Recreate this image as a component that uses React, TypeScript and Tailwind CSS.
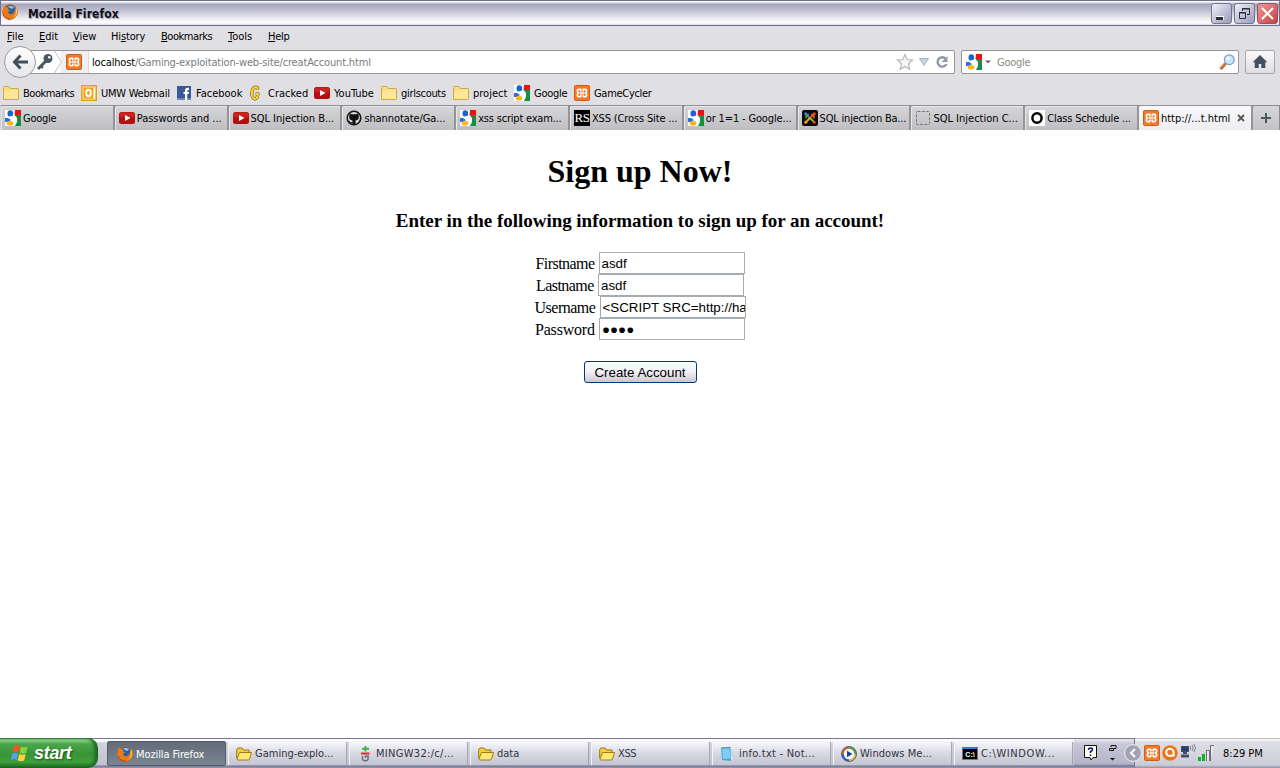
import React from "react";

type P = { className?: string };

const Firefox = ({ className = "" }: P) => (
  <svg viewBox="0 0 16 16" className={"size-4 shrink-0 " + className}>
    <circle cx="8" cy="8" r="7.700" fill="#d9620f" />
    <circle cx="8.400" cy="6.200" r="5.400" fill="#255fa8" />
    <path d="M6 2.500c2-1.500 5-.8 6 1l-2 1.500-2-1z" fill="#8cc6ea" />
    <path d="M1 4l1-3 1.500 2L6.500 3.500l-.5 2 2.500 1-2.500 1.200 1 2c2 1 4 .5 5-1.200l1.500-3.700L14 2.500c2.500 4 2 9-2 11.800C7 17 1 14 .5 9z" fill="#e87a17" />
    <path d="M14.200 3c2 4 1.200 9-3 11 2-2 3-5 2.500-8z" fill="#f9c83a" />
    <path d="M1 10q2 5 7.500 5.300" fill="none" stroke="#b8400c" />
  </svg>
);
const Xampp = ({ className = "" }: P) => (
  <svg viewBox="0 0 16 16" className={"size-4 shrink-0 " + className}>
    <rect x=".5" y=".5" width="15" height="15" rx="1" fill="#f27a2a" stroke="#cf5d12" />
    <path d="M6.800 6.500V4.400H5Q3.300 4.400 3.300 6T4.800 8Q3.300 8.300 3.300 10T5 11.600h1.800V9.500M9.200 6.500V4.400H11q1.700 0 1.700 1.600T11.200 8q1.500.3 1.500 2T11 11.600H9.200V9.500M6 8h4" fill="none" stroke="#fff" strokeWidth="1.600" strokeLinejoin="round" />
  </svg>
);
const Google = ({ className = "" }: P) => (
  <svg viewBox="0 0 16 16" className={"size-4 shrink-0 " + className}>
    <rect width="16" height="16" fill="#fff" />
    <path d="M8 0h8v5H9z" fill="#ee1111" />
    <path d="M10 5h6v11H9l2-4-2-4z" fill="#109145" />
    <path d="M0 8h3l3 2-3 2H0z" fill="#2c70d8" />
    <path d="M7 0h3l-.5 5L12 8v4l-2 4H7z" fill="#fff" />
    <ellipse cx="5.300" cy="3.400" rx="2.800" ry="3.200" fill="#1766cf" />
    <path d="M5.500 6.500c3 1 4 2 5 4" stroke="#fff" strokeWidth="1.500" fill="none" />
    <ellipse cx="5" cy="13.200" rx="3.300" ry="2.300" fill="#fbb516" />
  </svg>
);
const YouTube = () => (
  <svg viewBox="0 0 16 16" className="size-4 shrink-0">
    <rect y="2" width="16" height="12" rx="2.500" fill="#b0100f" />
    <rect x=".5" y="2.500" width="15" height="5" rx="2" fill="#c9221f" />
    <path d="M6 5l5.500 3L6 11z" fill="#fff" />
  </svg>
);
const Folder = () => (
  <svg viewBox="0 0 16 16" className="size-4 shrink-0">
    <path d="M.5 14.500v-12l.5-1h5l1.500 2h7.500l.5.500v10l-.5.500h-14z" fill="#f6dc82" stroke="#d3a843" />
    <path d="M1.300 6l5.700-.5 1-1h7V14H1.300z" fill="#fbe795" />
  </svg>
);
const TaskFolder = () => (
  <svg viewBox="0 0 16 16" className="size-4 shrink-0">
    <path d="M.7 12V3.500L2 2h4L7.500 4H13v2.500" fill="#f6ce45" stroke="#9b750b" />
    <path d="M1 13L3.500 6.500h12L13.500 13q-.3 1-1.500 1H2q-1 0-1-1z" fill="#ffe778" stroke="#a47c0b" />
  </svg>
);
const Outlook = () => (
  <svg viewBox="0 0 16 16" className="size-4 shrink-0">
    <rect x=".7" y=".7" width="14.600" height="14.600" fill="#fbe08a" stroke="#dfa01e" strokeWidth="1.400" />
    <path d="M9 3h5v10H9z" fill="#fff" />
    <path d="M2.500 2.500h10v11h-10z" fill="#eca51c" />
    <ellipse cx="7.500" cy="8" rx="2.300" ry="3.300" fill="none" stroke="#fff" strokeWidth="1.900" />
  </svg>
);
const Facebook = () => (
  <svg viewBox="0 0 16 16" className="size-4 shrink-0">
    <rect x="1" y="1" width="14" height="14" fill="#3a5796" />
    <path d="M1 13h14v2H1z" fill="#6d84b4" />
    <path d="M9 15V9H7.500V6.800H9V5.500C9 3.600 10 2.800 11.500 2.800H13V5h-1c-.6 0-.8.300-.8.900v.9H13L12.700 9h-1.500v6z" fill="#fff" />
  </svg>
);
const Cracked = () => (
  <svg viewBox="0 0 16 16" className="size-4 shrink-0">
    <path d="M9.500 5V3C7 1 4 3.500 3.800 8s2 6.500 4.200 5.500c1.500-.7 1.800-2.500 1.800-4.500H7.500" fill="none" stroke="#5a4a14" strokeWidth="3.200" />
    <path d="M9.500 5V3C7 1 4 3.500 3.800 8s2 6.500 4.200 5.500c1.500-.7 1.800-2.500 1.800-4.500H7.500" fill="none" stroke="#fbd22d" strokeWidth="2.200" />
  </svg>
);
const Github = () => (
  <svg viewBox="0 0 16 16" className="size-4 shrink-0">
    <circle cx="8" cy="8" r="6.800" fill="#d8d8d8" stroke="#171717" strokeWidth="1.600" />
    <path d="M3.700 3.300l2.200 1h4.200l2.200-1 .4 2.700q.8 4-3.200 4.500V15h-3v-4.500Q2.600 10 3.300 6z" fill="#111" />
    <path d="M3 11q1 2.500 4 1.800" stroke="#111" fill="none" />
  </svg>
);
const RS = () => (
  <span className="flex size-4 shrink-0 items-center justify-center overflow-hidden bg-black font-['Liberation_Serif',serif] text-[13px] leading-4 tracking-[-0.500px] text-white">RS</span>
);
const Joomla = () => (
  <svg viewBox="0 0 16 16" className="size-4 shrink-0">
    <rect width="16" height="16" rx="2" fill="#0b0b0b" />
    <g fill="none" strokeWidth="2">
      <path d="M4 4.500L8 8" stroke="#2f8be0" />
      <path d="M12 4L8 8" stroke="#e8402f" />
      <path d="M12 12L8 8" stroke="#6fc03a" />
      <path d="M4 12L8 8" stroke="#f3a41e" />
      <path d="M4 8.500V7q0-2 2-2.500h1" stroke="#55a83a" strokeWidth="1.500" />
      <path d="M9 4.500h1q2 .5 2 2.500v1.500" stroke="#e8702f" strokeWidth="1.500" />
    </g>
    <circle cx="3.700" cy="3.700" r="1.500" fill="#2f8be0" /><circle cx="12.300" cy="3.700" r="1.500" fill="#e8402f" /><circle cx="3.700" cy="12.300" r="1.500" fill="#f3a41e" /><circle cx="12.300" cy="12.300" r="1.500" fill="#e8402f" />
  </svg>
);
const Blank = () => (
  <svg viewBox="0 0 16 16" className="size-4 shrink-0"><rect x="1.500" y="1.500" width="13" height="13" rx="1" fill="none" stroke="#77777b" strokeDasharray="3 1.330" /></svg>
);
const Ring = () => (
  <svg viewBox="0 0 16 16" className="size-4 shrink-0"><rect width="16" height="16" fill="#fff" /><ellipse cx="8" cy="8" rx="4.600" ry="4.800" fill="none" stroke="#050505" strokeWidth="2.500" /></svg>
);
const MediaPlayer = () => (
  <svg viewBox="0 0 16 16" className="size-4 shrink-0">
    <circle cx="8" cy="8" r="7.500" fill="#3a62b8" />
    <path d="M8 .5A7.500 7.500 0 0 0 .5 8H3l5-5z" fill="#e2622c" /><path d="M8 .5A7.500 7.500 0 0 1 15.500 8H13L8 3z" fill="#56a83e" /><path d="M15.500 8A7.500 7.500 0 0 1 8 15.500V13l5-5z" fill="#e8b83a" />
    <circle cx="8" cy="8" r="7.500" fill="none" stroke="#4a5568" strokeWidth=".8" />
    <circle cx="8" cy="8" r="5.200" fill="#f4f8ff" /><path d="M6 4.800L11.500 8 6 11.200z" fill="#1d3f9e" />
  </svg>
);
const Notepad = () => (
  <svg viewBox="0 0 16 16" className="size-4 shrink-0"><path d="M1 2l9-1 3 11-2 3-9-1z" fill="#4aa6d4" /><path d="M2 3l7.500-.8 1 10L3 13z" fill="#7fcdf0" /><path d="M10.500 4l3 8-2.500 3z" fill="#cfe3ec" /><path d="M1.500 1.500h9" stroke="#567686" strokeDasharray="1 1" /></svg>
);
const Cmd = () => (
  <span className="flex h-[13px] w-4 shrink-0 items-center justify-center border border-t-2 border-[#777] border-t-[#3878d8] bg-black font-['Liberation_Sans',sans-serif] text-[7px] font-bold leading-none text-white">C:\</span>
);
const GitBash = () => (
  <svg viewBox="0 0 16 16" className="size-4 shrink-0" fill="none"><path d="M8.500 0v5.500M5 2.800h7" stroke="#35b64b" strokeWidth="2" /><path d="M4 7.500h8.500" stroke="#dd2d2d" strokeWidth="2" /><path d="M5.500 10v2.800q0 2 2.800 2t2.800-2V10H8.500v2" stroke="#707078" strokeWidth="1.500" /></svg>
);

const ui = "font-['DejaVu_Sans_Condensed','DejaVu_Sans',sans-serif] [font-stretch:condensed]";

const menus: [string, string, string, string][] = [
  ["", "F", "ile", "w-8"], ["", "E", "dit", "w-[34px]"], ["", "V", "iew", "w-[38px]"], ["Hi", "s", "tory", "w-[50px] tracking-[-0.150px]"],
  ["", "B", "ookmarks", "w-[67px] tracking-[-0.450px]"], ["", "T", "ools", "w-10"], ["", "H", "elp", "w-10 tracking-[-0.300px]"],
];
const bookmarks: [React.ReactNode, string, string][] = [
  [<Folder />, "Bookmarks", "w-[78px] tracking-[-0.450px]"], [<Outlook />, "UMW Webmail", "w-[95px] tracking-[-0.250px]"], [<Facebook />, "Facebook", "w-[72px]"],
  [<Cracked />, "Cracked", "w-[66px]"], [<YouTube />, "YouTube", "w-[67px]"], [<Folder />, "girlscouts", "w-[72px] tracking-[-0.300px]"],
  [<Folder />, "project", "w-[61px]"], [<Google />, "Google", "w-[60px] tracking-[-0.250px]"], [<Xampp />, "GameCycler", "w-[90px] tracking-[-0.300px]"],
];
const tabs: [React.ReactNode, string, string][] = [
  [<Google />, "Google", "tracking-[-0.250px]"], [<YouTube />, "Passwords and ...", "tracking-[-0.050px]"], [<YouTube />, "SQL Injection B...", "tracking-[-0.050px]"], [<Github />, "shannotate/Ga...", "tracking-[-0.100px]"],
  [<Google />, "xss script exam...", "tracking-[-0.200px]"], [<RS />, "XSS (Cross Site ...", "tracking-[-0.150px]"], [<Google />, "or 1=1 - Google...", "tracking-[-0.150px]"], [<Joomla />, "SQL injection Ba...", "tracking-[-0.200px]"],
  [<Blank />, "SQL Injection C...", "tracking-normal"], [<Ring />, "Class Schedule ...", "tracking-[-0.200px]"],
];
const tasks: [React.ReactNode, string, string][] = [
  [<Firefox />, "Mozilla Firefox", "tracking-[-0.100px]"], [<TaskFolder />, "Gaming-explo...", "tracking-normal"], [<GitBash />, "MINGW32:/c/...", "tracking-[0.300px]"], [<TaskFolder />, "data", "tracking-normal"],
  [<TaskFolder />, "XSS", "tracking-[-0.400px]"], [<Notepad />, "info.txt - Not...", "tracking-[0.250px]"], [<MediaPlayer />, "Windows Me...", "tracking-[0.050px]"], [<Cmd />, "C:\\WINDOW...", "tracking-[0.600px]"],
];
const fields = [
  { label: "Firstname", value: "asdf", w: "w-[59px] tracking-[-0.550px]" },
  { label: "Lastname", value: "asdf", w: "w-[58px] tracking-[-0.550px]" },
  { label: "Username", value: "<SCRIPT SRC=http://ha", w: "w-[61px] tracking-[-0.500px]" },
  { label: "Password", value: "●●●●", w: "w-[60px] tracking-[-0.200px]" },
];

const winBtn = "flex h-[21px] w-[21px] items-center justify-center rounded-[3px] border";

function TitleBar() {
  return (
    <div className="flex h-[26px] items-center border-x border-b border-t border-[#716f8b] bg-[linear-gradient(#fff_0,#f4f4f8_1px,#a5a4bd_3px,#b9b8cb_8px,#e9e9ef_17px,#fff_22px,#d4d4de_24px)] pl-px pr-px">
      <Firefox className="mt-[-2px]" />
      <span className="ml-[10px] flex-1 pt-px font-['DejaVu_Sans_Condensed','DejaVu_Sans',sans-serif] text-[12px] font-bold tracking-[0.100px] text-[#101018] [text-shadow:1px_1px_1px_#a0a0b4]">Mozilla Firefox</span>
      <div className="flex gap-[2px]">
        <div className={winBtn + " border-[#747494] bg-linear-to-br from-[#f2f2f7] to-[#9a99b8]"}>
          <svg viewBox="0 0 19 19" className="size-[19px]"><path d="M4 12h8v4H4z" fill="#fff" /><path d="M4 13h7v3H4z" fill="#2c2c40" /></svg>
        </div>
        <div className={winBtn + " border-[#747494] bg-linear-to-br from-[#f2f2f7] to-[#9a99b8]"}>
          <svg viewBox="0 0 19 19" className="size-[19px]" fill="none" stroke="#2c2c40"><path d="M7.500 7V4.500h7v6H12M7 5h8" /><path d="M4.500 8.500h6v6h-6zM4 9h7" /></svg>
        </div>
        <div className={winBtn + " border-[#8b5468] bg-linear-to-br from-[#e89a9a] to-[#c83c40]"}>
          <svg viewBox="0 0 19 19" className="size-[19px]"><path d="M4 4l11 11M15 4L4 15" stroke="#fff" strokeWidth="2" /></svg>
        </div>
      </div>
    </div>
  );
}

function NavBar() {
  return (
    <div className="flex h-[34px] items-start pt-1">
      <div className="relative z-10 ml-1 mt-[-4px] flex size-8 shrink-0 items-center justify-center rounded-full border border-[#9b9ba0] bg-linear-to-b from-white to-[#e6e6e9]">
        <svg viewBox="0 0 16 16" className="size-4" fill="none" stroke="#43505c" strokeWidth="3"><path d="M8.500 1.500L2.500 8l6 6.500M3 8h13" /></svg>
      </div>
      <div className="ml-[-10px] flex h-6 w-[929px] items-center rounded-[2px] border border-[#97979b] bg-white pl-[9px]">
        <svg viewBox="0 0 18 18" className="size-[18px] shrink-0"><circle cx="12" cy="5.500" r="4.500" fill="#4b5661" /><path d="M10 8L2 16" stroke="#4b5661" strokeWidth="3" /><path d="M5 13l2 2" stroke="#4b5661" strokeWidth="2" /><circle cx="13.300" cy="4.300" r="1.300" fill="#fff" /></svg>
        <div className="flex h-[22px] w-[35px] shrink-0 items-center border-r border-[#d9d9dc] bg-[linear-gradient(90deg,#fff_0,#fff_5px,#f0f0f2_8px)]">
          <svg viewBox="0 0 8 22" className="h-[22px] w-2"><path d="M0 0l7 11-7 11z" fill="#fff" /><path d="M.5 0l7 11-7 11" fill="none" stroke="#c5c5ca" /></svg>
          <Xampp className="ml-1" />
        </div>
        <span className="ml-[3px] flex-1 pt-0.5 text-[11px] tracking-[-0.170px] text-[#7b7b7b]"><span className="text-black">localhost</span>/Gaming-exploitation-web-site/creatAccount.html</span>
        <svg viewBox="0 0 18 18" className="size-[18px]"><path d="M9 1.500l2.200 5 5.300.5-4 3.700 1.200 5.500L9 13.400l-4.700 2.800 1.200-5.500L1.500 7l5.300-.5z" fill="#f8f8f9" stroke="#b6b6bb" strokeWidth="1.200" /></svg>
        <svg viewBox="0 0 10 8" className="ml-[5px] h-2 w-[10px]"><path d="M.5.5h9L5 7.500z" fill="#cfd4dc" stroke="#a9afba" /></svg>
        <svg viewBox="0 0 14 14" className="ml-[6px] mr-[5px] size-[14px]"><path d="M10.500 3.500A4.700 4.700 0 1 0 11.500 9" fill="none" stroke="#8e98a4" strokeWidth="2.400" /><path d="M12.500 1v6h-6z" fill="#8e98a4" /></svg>
      </div>
      <div className="ml-[6px] flex h-6 w-[278px] items-center rounded-[2px] border border-[#97979b] bg-white pl-1">
        <Google />
        <svg viewBox="0 0 6 4" className="ml-[3px] h-1 w-[6px]"><path d="M0 .5h6L3 3.500z" fill="#666" /></svg>
        <span className="ml-[6px] flex-1 pt-0.5 text-[11px] tracking-[-0.250px] text-[#8c8a80]">Google</span>
        <svg viewBox="0 0 16 16" className="mr-[3px] size-4"><path d="M6.500 9.500L1.500 15" stroke="#b5652b" strokeWidth="3" /><path d="M6 9.500L1 14.500" stroke="#eea556" /><circle cx="10.300" cy="5.700" r="4.900" fill="#c5e6fb" stroke="#7f9fc6" strokeWidth="1.200" /><circle cx="9" cy="4.300" r="1.800" fill="#f3fbff" /></svg>
      </div>
      <div className="ml-[6px] flex h-6 w-[30px] items-center justify-center rounded-[2px] border border-[#a5a5aa] bg-linear-to-b from-[#fafafb] to-[#dfdfe3]">
        <svg viewBox="0 0 16 16" className="size-4"><path d="M8 1L.7 8.300h2V14h4v-4h2.600v4h4V8.300h2z" fill="#434f5b" /></svg>
      </div>
    </div>
  );
}

function Tabs() {
  return (
    <div className="flex h-[25px] bg-[#8f8f94] text-[11px]">
      <div className="w-px bg-[#d0d0d3]" />
      {tabs.map(([icon, t, tr]) => (
        <div key={t} className="flex w-[113.800px] shrink-0 items-center rounded-t-[2px] border-r-2 border-t border-r-[#939398] border-t-[#8d8d92] bg-linear-to-b from-[#d6d6d8] to-[#bfbfc3] pl-1 shadow-[inset_1px_1px_0_#e8e8ea]">
          {icon}<span className={"ml-[2px] whitespace-nowrap pt-[3px] " + tr}>{t}</span>
        </div>
      ))}
      <div className="flex w-[114px] shrink-0 items-center rounded-t-[2px] border-r-2 border-t border-[#939398] bg-linear-to-b from-[#f8f8fa] to-[#eeeef1] pl-1">
        <Xampp /><span className="ml-[2px] flex-1 whitespace-nowrap pt-[3px]">http://...t.html</span>
        <svg viewBox="0 0 8 8" className="mr-[6px] size-2"><path d="M1 1l6 6M7 1L1 7" stroke="#555" strokeWidth="1.800" /></svg>
      </div>
      <div className="flex flex-1 items-center justify-center rounded-t-[2px] border-r border-t border-[#8b8b90] bg-linear-to-b from-[#d6d6d8] to-[#c3c3c7]">
        <svg viewBox="0 0 10 10" className="size-[10px]"><path d="M5 0v10M0 5h10" stroke="#4a555c" strokeWidth="2" /></svg>
      </div>
    </div>
  );
}

function SignUp() {
  return (
    <main className="flex flex-1 flex-col items-center bg-white font-['Liberation_Serif',serif] text-black">
      <h1 className="mt-[23px] text-[32px] font-bold leading-[37px]">Sign up Now!</h1>
      <h3 className="mt-5 text-[19px] font-bold leading-[22px] tracking-[-0.030px]">Enter in the following information to sign up for an account!</h3>
      <form className="mt-5 flex flex-col items-center">
        {fields.map((f) => (
          <div key={f.label} className="flex h-[22px] items-center">
            <label className={"whitespace-nowrap pt-px text-[16px] " + f.w}>{f.label}</label>
            <div className="ml-1 flex h-[22px] w-[146px] items-center overflow-hidden whitespace-nowrap border border-[#a5acb2] bg-white pl-[2px] pt-px font-['Liberation_Sans',sans-serif] text-[13.330px]">{f.value}</div>
          </div>
        ))}
        <button type="button" className="mt-[21px] h-[22px] w-[113px] rounded-[3px] border border-[#003c74] bg-linear-to-b from-white via-[#f1f1f6] to-[#c7c6d9] pt-px font-['Liberation_Sans',sans-serif] text-[13.330px] leading-5">Create Account</button>
      </form>
    </main>
  );
}

function Taskbar() {
  return (
    <footer className="flex h-[30px] bg-[linear-gradient(#787794_0,#787794_1px,#f7f7fa_1px,#fff_3px,#d3d3de_5px,#c0c0cf_27px,#787794_28px,#9a99b0_30px)]">
      <div className="flex w-[98px] items-center rounded-r-[10px] border-b border-r border-[#1c6220] bg-[linear-gradient(#2f7a33_0,#8ed48b_2px,#4ba54b_6px,#379537_16px,#3f9f3e_24px,#1f6f22_29px)] pl-[11px] shadow-[inset_-3px_0_3px_#1f7324]">
        <svg viewBox="0 0 18 18" className="size-[18px]"><path d="M3 2q3-2 6 0L7.500 8.500q-3-1.500-6 0z" fill="#f0562b" /><path d="M10 2.500q3 1.500 6.500 0L15 9q-3 1.500-6.500 0z" fill="#8ccf3c" /><path d="M1.200 9.500q3-1.500 6 0L5.800 16q-3-1.800-6 0z" fill="#5b9df0" /><path d="M8.200 10q3.500 1.500 6.500 0l-1.500 6.500q-3 1.500-6.500 0z" fill="#fcd33c" /></svg>
        <span className="ml-[5px] font-['Liberation_Sans',sans-serif] text-[18px] font-bold italic leading-none tracking-[-0.300px] text-white [text-shadow:1px_1px_2px_#164e18]">start</span>
      </div>
      <div className="ml-[9px] flex gap-[2px] pt-[3px]">
        {tasks.map(([icon, t, tr], i) => (
          <div key={t} className={"flex h-[25px] w-[119px] items-center rounded-[2px] border text-[11px] " + (i === 0 ? "border-[#555c68] bg-linear-to-b from-[#626b78] to-[#7b8592] pl-[9px] text-white" : "border-[#f4f4f8] border-b-[#9796ac] border-r-[#a5a4b8] bg-linear-to-b from-[#f7f7fb] via-[#d8d8e3] to-[#c5c5d4] pl-[7px] text-[#33333b]")}>
            {icon}<span className={"whitespace-nowrap " + tr + (i === 0 ? " ml-[3px] pt-[3px]" : " ml-[3px] pt-0.5")}>{t}</span>
          </div>
        ))}
      </div>
      <div className="ml-px flex w-[61px] items-center border-r border-[#787794] bg-[linear-gradient(#787794_0,#787794_1px,#e9e9f0_1px,#c9c8d8_6px,#b4b3c8_26px,#787794_28px,#9a99b0_30px)] pl-[10px]">
        <svg viewBox="0 0 14 16" className="h-4 w-[14px]"><path d="M.5.500h12v12H9L7 15l-1-2.500H.5z" fill="#fffff0" stroke="#111" /><path d="M4.500 5q0-2 2-2t2 1.500-2 2V8M6.500 9.500v1.500" fill="none" stroke="#131370" strokeWidth="1.500" /></svg>
        <svg viewBox="0 0 9 18" className="ml-[10px] h-[18px] w-[9px]"><path d="M3 3V1.500h5v3H6M1.500 4.500h4v2h-4z" fill="none" stroke="#111" /><path d="M2 14h5l-2.500 2.500z" fill="#111" /></svg>
      </div>
      <div className="flex flex-1 items-center bg-[linear-gradient(#787794_0,#fff_1px,#dedee6_4px,#cdcdd8_27px,#8f8ea5_30px)] text-[11px]">
        <svg viewBox="0 0 18 18" className="ml-[-11px] size-[18px] shrink-0"><circle cx="9" cy="9" r="8.400" fill="#a3a2b5" stroke="#ededf4" /><path d="M11 5L7 9l4 4" fill="none" stroke="#fff" strokeWidth="2" /></svg>
        <Xampp className="ml-[2px]" />
        <svg viewBox="0 0 16 16" className="ml-[2px] size-4"><circle cx="8" cy="8" r="7.700" fill="#e87715" /><path d="M10.500 10A3.700 3.700 0 1 1 11.600 7v4.500" fill="none" stroke="#fff" strokeWidth="2" /></svg>
        <svg viewBox="0 0 16 16" className="mb-1 ml-[2px] size-4"><path d="M1 3h8v6H1zM3 9h4v2H3zM1 11.500h8v3H1z" fill="#47506b" /><path d="M2 4h6v4H2z" fill="#27396d" /><path d="M10 3q1.500 2 0 4M12 2q2.500 3 0 6M14 1q3 4 0 8" fill="none" stroke="#777783" strokeWidth=".9" /></svg>
        <svg viewBox="0 0 16 16" className="ml-[2px] size-4"><path d="M0 12h3v4H0zM4 9h3v7H4z" fill="#08b526" /><path d="M8.500 16V5.500h3V16M12.500 16V.500H16" fill="#e9e9ed" stroke="#6f6f78" /></svg>
        <span className="ml-[9px] whitespace-nowrap pt-0.5 text-black">8:29 PM</span>
      </div>
    </footer>
  );
}

export default function App() {
  return (
    <div className={"flex h-[768px] w-[1280px] flex-col overflow-hidden bg-[#e0dfe3] text-black " + ui}>
      <TitleBar />
      <div className="flex h-5 items-center pl-[7px] pt-0.5 text-[11px]">
        {menus.map(([a, b, c, w]) => <span key={a + b + c} className={w}>{a}<u>{b}</u>{c}</span>)}
      </div>
      <NavBar />
      <div className="flex h-[25px] items-center pl-[3px] pt-px text-[11px]">
        {bookmarks.map(([icon, t, w]) => <div key={t} className={"flex items-center gap-1 whitespace-nowrap " + w}>{icon}<span className="pt-0.5">{t}</span></div>)}
      </div>
      <Tabs />
      <SignUp />
      <Taskbar />
    </div>
  );
}
